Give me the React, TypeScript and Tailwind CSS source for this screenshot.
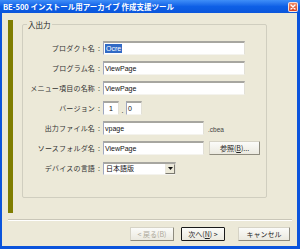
import React from 'react'

/* ================= helpers ================= */
const JP = { fontFamily: '"Noto Sans CJK JP", "Liberation Sans", sans-serif' }
const LAT = { fontFamily: '"Liberation Sans", "Noto Sans CJK JP", sans-serif' }

function Campo({
  label,
  children,
}: {
  label: string
  children: React.ReactNode
}) {
  return (
    <div className="flex h-[14px] items-center">
      <div className="flex w-[77px] justify-end text-[7px] leading-none text-[#333]" style={JP}>
        <span className="tracking-[0.2px]">{label}</span>
        <span className="ml-[3px]">:</span>
      </div>
      <div className="ml-[3px] flex h-full items-center">{children}</div>
    </div>
  )
}

function Caixa({
  w,
  value,
  selecionado = false,
  centro = false,
}: {
  w: string
  value: string
  selecionado?: boolean
  centro?: boolean
}) {
  return (
    <div
      className={`flex h-[14px] items-center bg-white border-t-2 border-l border-t-[#a7a6a0] border-l-[#9fa7c0] border-r border-b border-r-[#e2e0d6] border-b-[#f4f3ee] ${w} ${
        centro ? 'justify-center' : 'pl-[1px]'
      }`}
    >
      <span
        className={`text-[7px] leading-[9px] ${selecionado ? 'bg-[#316ac5] text-white px-[1px]' : 'text-[#111]'}`}
        style={LAT}
      >
        {value}
      </span>
    </div>
  )
}

function Botao({
  w,
  children,
  padrao = false,
  desativado = false,
}: {
  w: string
  children: React.ReactNode
  padrao?: boolean
  desativado?: boolean
}) {
  return (
    <button
      type="button"
      className={`flex h-[14px] ${w} items-center justify-center rounded-[1px] bg-gradient-to-b from-[#fbfbf9] to-[#ebe9df] text-[7px] leading-none ${
        padrao
          ? 'border border-[#1a1a1a]'
          : 'border border-[#d6d3c6] border-r-[#8e8b7e] border-b-[#8e8b7e]'
      } ${desativado ? 'text-[#aca899]' : 'text-[#222]'}`}
      style={JP}
    >
      {children}
    </button>
  )
}

/* ================= COMPONENTE ================= */
export default function App() {
  return (
    <div className="flex h-[249px] w-[300px] flex-col bg-[#0b54dc]" style={JP}>
      {/* barra de título */}
      <div className="flex h-[13px] items-center bg-gradient-to-b from-[#3f8ef8] via-[#0e5fe6] to-[#0a56dc]">
        <span className="pl-[3px] text-[7.5px] font-bold leading-none text-white">
          BE-500 インストール用アーカイブ 作成支援ツール
        </span>
        <div className="ml-auto mr-[2px] flex h-[10px] w-[10px] items-center justify-center rounded-[2px] border border-white/80 bg-gradient-to-b from-[#f08a68] to-[#d8401c]">
          <svg width="6" height="6" viewBox="0 0 6 6">
            <path d="M1 1 L5 5 M5 1 L1 5" stroke="white" strokeWidth="1.4" strokeLinecap="round" />
          </svg>
        </div>
      </div>

      <div className="flex flex-1">
        <div className="w-[2px] bg-[#0b54dc]" />

        {/* corpo */}
        <div className="flex w-[295px] flex-col bg-[#ece9d8]">
          <div className="mt-[7px] flex pl-[6px]">
            <div className="h-[193px] w-[5px] bg-[#7f7d00]" />

            {/* grupo 入出力 */}
            <div className="relative ml-[9px] mt-[4px] h-[174px] w-[245px] rounded-[2px] border border-[#d0cebf]">
              <span className="absolute -top-[5px] left-[4px] bg-[#ece9d8] px-[1px] text-[7.5px] leading-[9px] text-[#222]">
                入出力
              </span>

              <div className="flex flex-col gap-[6px] pt-[16px]">
                <Campo label="プロダクト名">
                  <Caixa w="w-[142px]" value="Ocre" selecionado />
                </Campo>
                <Campo label="プログラム名">
                  <Caixa w="w-[142px]" value="ViewPage" />
                </Campo>
                <Campo label="メニュー項目の名称">
                  <Caixa w="w-[142px]" value="ViewPage" />
                </Campo>
                <Campo label="バージョン">
                  <Caixa w="w-[16px]" value="1" centro />
                  <span className="w-[7px] self-end text-center text-[7px] leading-[9px]" style={LAT}>
                    .
                  </span>
                  <Caixa w="w-[16px]" value="0" />
                </Campo>
                <Campo label="出力ファイル名">
                  <Caixa w="w-[101px]" value="vpage" />
                  <span className="ml-[4px] mt-[4px] text-[6.5px] leading-none text-[#444]" style={LAT}>
                    .cbea
                  </span>
                </Campo>
                <Campo label="ソースフォルダ名">
                  <Caixa w="w-[101px]" value="ViewPage" />
                  <div className="ml-[5px]">
                    <Botao w="w-[51px]">
                      参照(<span className="underline">B</span>)...
                    </Botao>
                  </div>
                </Campo>
                <Campo label="デバイスの言語">
                  <div className="flex h-[13px] w-[73px] items-center border-t-2 border-l border-t-[#a7a6a0] border-l-[#9fa7c0] border-r border-b border-r-[#e2e0d6] border-b-[#f4f3ee] bg-white">
                    <span className="pl-[2px] text-[7px] leading-none text-[#111]">日本語版</span>
                    <div className="ml-auto flex h-full w-[10px] items-center justify-center border border-[#e8e6dc] border-r-[#7c7a70] border-b-[#7c7a70] bg-[#ece9d8]">
                      <svg width="5" height="3" viewBox="0 0 5 3">
                        <path d="M0 0 H5 L2.5 3 Z" fill="#111" />
                      </svg>
                    </div>
                  </div>
                </Campo>
              </div>
            </div>
          </div>

          {/* separador */}
          <div className="ml-[6px] mr-[5px] mt-[6px] h-[2px] border-t border-b border-t-[#c9c6b8] border-b-white" />

          {/* botões */}
          <div className="mt-[6px] flex pr-[7px] justify-end">
            <Botao w="w-[44px]" desativado>
              &lt; 戻る(B)
            </Botao>
            <div className="ml-[7px]">
              <Botao w="w-[44px]" padrao>
                次へ(<span className="underline">N</span>) &gt;
              </Botao>
            </div>
            <div className="ml-[13px]">
              <Botao w="w-[52px]">キャンセル</Botao>
            </div>
          </div>
        </div>

        <div className="w-[3px] bg-[#0b54dc]" />
      </div>
      <div className="h-[3px] bg-[#0b54dc]" />
    </div>
  )
}
